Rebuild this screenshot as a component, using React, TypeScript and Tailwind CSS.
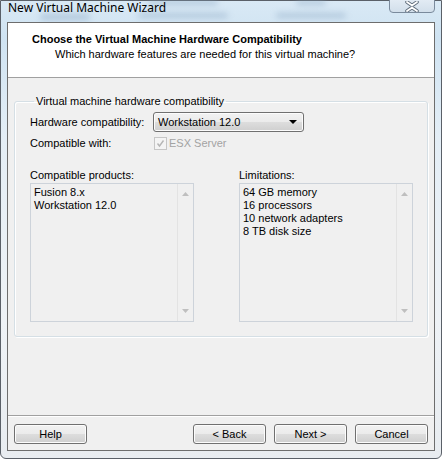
import React from "react";

const ui = { fontFamily: '"Liberation Sans", Arial, sans-serif' };

function Button({ label }: { label: string }) {
  return (
    <button
      className="h-[20px] w-[73px] rounded-[3px] border border-[#707070] bg-[linear-gradient(#f2f2f2_0%,#ebebeb_50%,#dddddd_51%,#cfcfcf_100%)] text-[11px] leading-none text-black shadow-[inset_0_0_0_1px_#fcfcfc]"
    >
      {label}
    </button>
  );
}

function ListBox({ items, width }: { items: string[]; width: string }) {
  return (
    <div className={`${width} flex h-[139px] border border-[#cdd3da] bg-[#f0f0f0]`}>
      <div className="flex-1 px-[3px] pt-[2px] text-[11px] leading-[13px] text-black">
        {items.map((it) => (
          <div key={it}>{it}</div>
        ))}
      </div>
      <div className="flex w-[16px] flex-col items-center justify-between border-l border-[#e3e3e3] py-[8px]">
        <svg width="7" height="4" viewBox="0 0 7 4">
          <path d="M0 4 L3.5 0 L7 4 Z" fill="#bfbfbf" />
        </svg>
        <svg width="7" height="4" viewBox="0 0 7 4">
          <path d="M0 0 L7 0 L3.5 4 Z" fill="#bfbfbf" />
        </svg>
      </div>
    </div>
  );
}

export default function App() {
  return (
    <div className="relative h-[459px] w-[442px] overflow-hidden" style={ui}>
      {/* glass frame */}
      <div className="absolute inset-0 rounded-b-[6px] border border-[#5a6068] bg-[linear-gradient(180deg,#d9e9f5_0%,#cfe3f2_8%,#e4eef6_30%,#eef2f6_70%,#e8ecf0_100%)]" />
      {/* blurred desktop showing through the glass */}
      <div className="pointer-events-none absolute left-[40px] top-[0px] flex gap-[48px] opacity-50 blur-[3px]">
        <div className="mt-[14px] h-[6px] w-[50px] rounded-full bg-[#8aa6c2]" />
        <div className="flex flex-col items-center gap-[8px]">
          <div className="h-[5px] w-[70px] rounded-full bg-[#8aa6c2]" />
          <div className="h-[5px] w-[90px] rounded-full bg-[#8aa6c2]" />
        </div>
        <div className="flex flex-col items-center gap-[8px]">
          <div className="h-[5px] w-[30px] rounded-full bg-[#8aa6c2]" />
          <div className="h-[5px] w-[70px] rounded-full bg-[#8aa6c2]" />
        </div>
      </div>

      <div className="relative flex h-full flex-col px-[7px] pb-[8px]">
        {/* title bar */}
        <div className="flex h-[22px] items-start justify-between">
          <span
            className="pl-[1px] text-[12px] leading-[16px] text-black"
            style={{ fontFamily: '"Noto Sans", "Liberation Sans", sans-serif' }}
          >
            New Virtual Machine Wizard
          </span>
          <div className="-mt-[4px] flex h-[17px] w-[46px] items-center justify-center rounded-b-[4px] border border-[#7a8a9c] bg-[linear-gradient(#e6eef6,#d2dfeb)] pt-[3px]">
            <svg width="14" height="11" viewBox="0 0 14 11">
              <path
                d="M2 1 L7 4.5 L12 1 M2 10 L7 6.5 L12 10"
                stroke="#5f6d7c"
                strokeWidth="3.6"
                fill="none"
                strokeLinecap="round"
              />
              <path
                d="M2 1 L7 4.5 L12 1 M2 10 L7 6.5 L12 10"
                stroke="#ffffff"
                strokeWidth="1.8"
                fill="none"
                strokeLinecap="round"
              />
            </svg>
          </div>
        </div>

        {/* client area */}
        <div className="flex flex-1 flex-col border border-[#6d6d6d] bg-[#f0f0f0]">
          <div className="h-[55px] border-b border-[#a0a0a0] bg-white pl-[24px] pt-[9px]">
            <div className="text-[11px] font-bold leading-[14px] text-black">
              Choose the Virtual Machine Hardware Compatibility
            </div>
            <div className="pl-[23px] pt-[1px] text-[11px] leading-[14px] text-black">
              Which hardware features are needed for this virtual machine?
            </div>
          </div>

          <div className="flex-1 px-[6px] pt-[17px]">
            <fieldset className="rounded-[3px] border border-[#d5dfe5] pb-[14px] pl-[15px] pr-[14px] shadow-[inset_1px_1px_0_#ffffff,1px_1px_0_#ffffff]">
              <legend className="ml-[4px] px-[2px] text-[11px] leading-[13px] text-black">
                Virtual machine hardware compatibility
              </legend>
              <div className="mt-[4px] flex items-center">
                <span className="w-[123px] text-[11px] text-black">Hardware compatibility:</span>
                <div className="flex h-[20px] w-[151px] items-center justify-between rounded-[3px] border border-[#707070] bg-[linear-gradient(#f2f2f2_0%,#ebebeb_50%,#dddddd_51%,#cfcfcf_100%)] pl-[4px] pr-[6px] text-[11px] text-black shadow-[inset_0_0_0_1px_#fcfcfc]">
                  <span>Workstation 12.0</span>
                  <svg width="8" height="4" viewBox="0 0 8 4">
                    <path d="M0 0 L8 0 L4 4 Z" fill="#000" />
                  </svg>
                </div>
              </div>
              <div className="mt-[3px] flex items-center">
                <span className="w-[124px] text-[11px] text-black">Compatible with:</span>
                <div className="flex h-[13px] w-[13px] items-center justify-center border border-[#c6c6c6] bg-[#f4f4f4]">
                  <svg width="9" height="9" viewBox="0 0 9 9">
                    <path d="M1.5 4.5 L3.5 7 L7.5 1.5" stroke="#b5b5b5" strokeWidth="1.4" fill="none" />
                  </svg>
                </div>
                <span className="ml-[2px] text-[11px] text-[#a3a3a3]">ESX Server</span>
              </div>

              <div className="mt-[17px] flex justify-between">
                <div className="flex flex-col">
                  <span className="mb-[1px] text-[11px] leading-[13px] text-black">Compatible products:</span>
                  <ListBox width="w-[164px]" items={["Fusion 8.x", "Workstation 12.0"]} />
                </div>
                <div className="flex flex-col">
                  <span className="mb-[1px] text-[11px] leading-[13px] text-black">Limitations:</span>
                  <ListBox
                    width="w-[174px]"
                    items={["64 GB memory", "16 processors", "10 network adapters", "8 TB disk size"]}
                  />
                </div>
              </div>
            </fieldset>
          </div>

          <div className="border-t border-[#a0a0a0]">
            <div className="flex items-center justify-between border-t border-white px-[6px] pb-[6px] pt-[7px]">
              <Button label="Help" />
              <div className="flex gap-[8px]">
                <Button label="< Back" />
                <Button label="Next >" />
                <Button label="Cancel" />
              </div>
            </div>
          </div>
        </div>
      </div>
    </div>
  );
}
